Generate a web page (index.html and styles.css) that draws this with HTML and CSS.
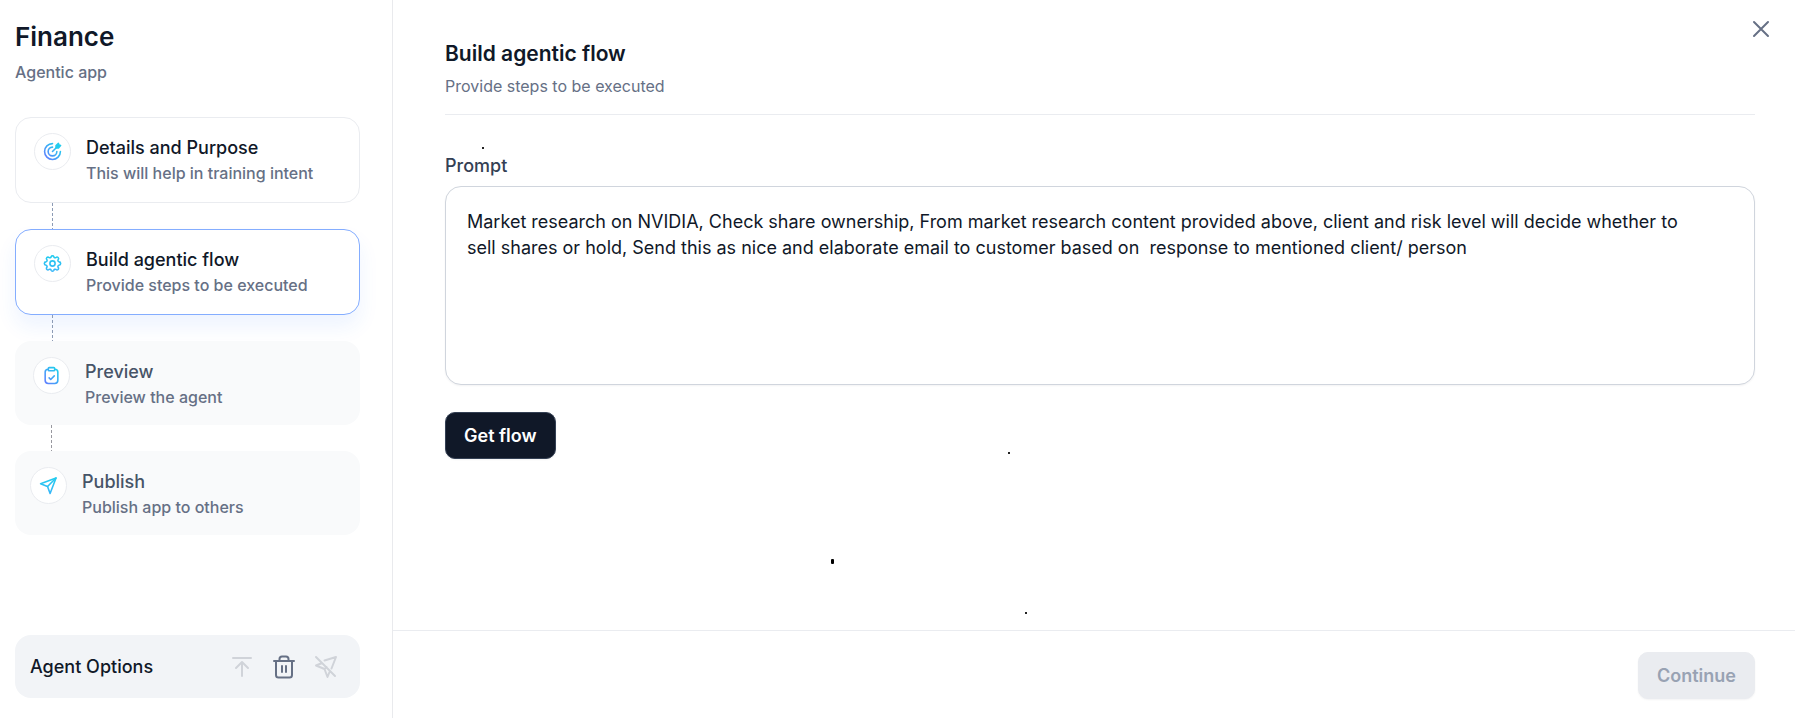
FILE: index.html
```html
<!DOCTYPE html>
<html lang="en">
<head>
<meta charset="utf-8">
<meta name="viewport" content="width=device-width, initial-scale=1">
<title>Finance - Build agentic flow</title>
<link rel="stylesheet" href="styles.css">
</head>
<body>
<svg class="defs" width="0" height="0" aria-hidden="true">
  <defs>
    <linearGradient id="sky" gradientUnits="userSpaceOnUse" x1="19" y1="5" x2="3" y2="20">
      <stop offset="0" stop-color="#22ccee"/><stop offset="1" stop-color="#6080ff"/>
    </linearGradient>
    <linearGradient id="cyan" gradientUnits="userSpaceOnUse" x1="12" y1="2" x2="12" y2="22">
      <stop offset="0" stop-color="#22ccee"/><stop offset="1" stop-color="#38b6f8"/>
    </linearGradient>
  </defs>
</svg>
<div class="app">
  <aside class="sidebar">
    <header class="app-head">
      <h1 class="app-title">Finance</h1>
      <p class="app-kind">Agentic app</p>
    </header>
    <nav class="steps" aria-label="Setup steps">
      <button class="step" type="button">
        <span class="step-icon">
          <svg viewBox="0 0 24 24" fill="none" stroke="url(#sky)" stroke-width="2" stroke-linecap="round" stroke-linejoin="round"><path d="M22 12A10 10 0 1 1 12 2"/><path d="M17.5 12A5.500 5.500 0 1 1 12 6.500"/><path d="M12 12L17 7"/><path d="M16.500 7.500V4.500L19.500 1.800L20.200 3.800L22.200 4.500L19.500 7.500Z" fill="#22ccee" stroke="#22ccee"/></svg>
        </span>
        <span class="step-text"><span class="step-title">Details and Purpose</span><span class="step-sub">This will help in training intent</span></span>
      </button>
      <span class="link"></span>
      <button class="step active" type="button" aria-current="step">
        <span class="step-icon">
          <svg viewBox="0 0 24 24" fill="none" stroke="url(#cyan)" stroke-width="2" stroke-linecap="round" stroke-linejoin="round"><circle cx="12" cy="12" r="3.300"/><path d="M10.300 3.400a1.800 1.800 0 0 1 3.400 0a1.800 1.800 0 0 0 2.700 1.100a1.800 1.800 0 0 1 2.700 2.700a1.800 1.800 0 0 0 1.100 2.700a1.800 1.800 0 0 1 0 4.200a1.800 1.800 0 0 0-1.100 2.700a1.800 1.800 0 0 1-2.700 2.700a1.800 1.800 0 0 0-2.700 1.100a1.800 1.800 0 0 1-3.400 0a1.800 1.800 0 0 0-2.700-1.100a1.800 1.800 0 0 1-2.700-2.700a1.800 1.800 0 0 0-1.100-2.700a1.800 1.800 0 0 1 0-4.200a1.800 1.800 0 0 0 1.100-2.700a1.800 1.800 0 0 1 2.700-2.700a1.800 1.800 0 0 0 2.700-1.100z"/></svg>
        </span>
        <span class="step-text"><span class="step-title">Build agentic flow</span><span class="step-sub">Provide steps to be executed</span></span>
      </button>
      <span class="link"></span>
      <button class="step pending" type="button">
        <span class="step-icon">
          <svg viewBox="0 0 24 24" fill="none" stroke="url(#sky)" stroke-width="2" stroke-linecap="round" stroke-linejoin="round"><path d="M16 4c2.500 0 4 .8 4 3.500V18c0 2.500-1 4-4 4H8c-3 0-4-1.500-4-4V7.500C4 4.800 5.500 4 8 4"/><rect x="8" y="2" width="8" height="4" rx="1"/><path d="M9 15l2 2 4.500-4.500"/></svg>
        </span>
        <span class="step-text"><span class="step-title">Preview</span><span class="step-sub">Preview the agent</span></span>
      </button>
      <span class="link grey"></span>
      <button class="step pending last" type="button">
        <span class="step-icon">
          <svg viewBox="0 0 24 24" fill="none" stroke="url(#cyan)" stroke-width="2" stroke-linecap="round" stroke-linejoin="round"><path d="M21.500 2.500L2 9.800l8.800 3.500L14 22z"/><path d="M21.500 2.500L10.800 13.300"/></svg>
        </span>
        <span class="step-text"><span class="step-title">Publish</span><span class="step-sub">Publish app to others</span></span>
      </button>
    </nav>
    <section class="options" aria-label="Agent Options">
      <span class="options-title">Agent Options</span>
      <button class="icon-btn" type="button" aria-label="Upload" disabled>
        <svg viewBox="0 0 24 24" fill="none" stroke="currentColor" stroke-width="2" stroke-linecap="round" stroke-linejoin="round"><path d="M3 3h18M12 21V7M6 13l6-6 6 6"/></svg>
      </button>
      <button class="icon-btn" type="button" aria-label="Delete">
        <svg viewBox="0 0 24 24" fill="none" stroke="currentColor" stroke-width="2" stroke-linecap="round" stroke-linejoin="round"><path d="M2 6h20M7.500 6V4a2.500 2.500 0 0 1 2.500-2.500h4A2.500 2.500 0 0 1 16.500 4v2M4 6v14a2.500 2.500 0 0 0 2.500 2.500h11A2.500 2.500 0 0 0 20 20V6M10 11v6M14 11v6"/></svg>
      </button>
      <button class="icon-btn" type="button" aria-label="Unpublish" disabled>
        <svg viewBox="0 0 24 24" fill="none" stroke="currentColor" stroke-width="2" stroke-linecap="round" stroke-linejoin="round"><path d="M10.500 5.500L22 2l-4.500 11.500M15.500 17L13.500 22l-3-8L2 10.500l5-2M2 2l19 19M10.500 14l2-2"/></svg>
      </button>
    </section>
  </aside>
  <main class="main">
    <button class="close" type="button" aria-label="Close">
      <svg viewBox="0 0 24 24" fill="none" stroke="currentColor" stroke-width="2" stroke-linecap="round"><path d="M5 5l14 14M19 5L5 19"/></svg>
    </button>
    <div class="content">
      <header class="page-head">
        <h2 class="page-title">Build agentic flow</h2>
        <p class="page-sub">Provide steps to be executed</p>
      </header>
      <form class="form">
        <label class="label" for="prompt">Prompt</label>
        <textarea class="prompt" id="prompt" spellcheck="false">Market research on NVIDIA, Check share ownership, From market research content provided above, client and risk level will decide whether to sell shares or hold, Send this as nice and elaborate email to customer based on  response to mentioned client/ person</textarea>
        <button class="btn primary" type="button">Get flow</button>
      </form>
    </div>
    <footer class="foot">
      <button class="btn" type="button" disabled>Continue</button>
    </footer>
    <span class="speck speck-a"></span>
    <span class="speck speck-b"></span>
    <span class="speck speck-c"></span>
    <span class="speck speck-d"></span>
  </main>
</div>
</body>
</html>
```
FILE: styles.css
```css
* { box-sizing: border-box; }
body {
  margin: 0;
  background: #fff;
  color: #101828;
  font-family: Inter, "Liberation Sans", sans-serif;
}
h1, h2, p { margin: 0; }
button { font: inherit; color: inherit; }
svg { display: block; }
.defs { position: absolute; }

.app { display: flex; min-height: 100vh; }

.sidebar {
  display: flex;
  flex-direction: column;
  flex: none;
  width: 393px;
  padding: 20px 32px 20px 15px;
  border-right: 1px solid #e9eaed;
}
.app-head { margin-bottom: 32px; }
.app-title { font-size: 26px; line-height: 34px; font-weight: 600; }
.app-kind { margin-top: 6px; font-size: 16px; line-height: 25px; font-weight: 500; color: #667085; }

.steps { display: flex; flex-direction: column; }
.step {
  display: flex;
  gap: 15px;
  padding: 15px 18px 19px;
  border: 1px solid #eaecf0;
  border-radius: 16px;
  background: #fff;
  text-align: left;
}
.step.active { border-color: #84adff; box-shadow: 0 12px 20px rgba(41, 112, 255, 0.08); }
.step.pending { padding: 16px 18px 18px; border: 0; background: #f9fafb; position: relative; }
.step.last { padding-left: 15px; }
.step-icon {
  display: grid;
  place-items: center;
  flex: none;
  width: 37px;
  height: 37px;
  border: 1px solid #eaecf0;
  border-radius: 50%;
  background: #fff;
}
.step-icon svg { width: 19px; height: 19px; }
.step-text { display: flex; flex-direction: column; }
.step-title { font-size: 18px; line-height: 30px; font-weight: 500; }
.step-sub { font-size: 16px; line-height: 20px; font-weight: 500; color: #667085; }
.pending .step-title { color: #475467; }
.link {
  position: relative;
  z-index: 1;
  width: 1px;
  height: 26px;
  margin-left: 37px;
  background: repeating-linear-gradient(#8c9bb5 0 3px, transparent 3px 5px);
}
.link.grey { margin-left: 36px; background: repeating-linear-gradient(#98989f 0 3px, transparent 3px 5px); }

.options {
  display: flex;
  align-items: center;
  gap: 18px;
  margin-top: auto;
  padding: 19px 22px 18px 15px;
  border-radius: 16px;
  background: #f2f4f7;
}
.options-title { flex: 1; font-size: 18px; line-height: 26px; font-weight: 500; }
.icon-btn { padding: 0; border: 0; background: none; color: #667085; }
.icon-btn:disabled { color: #d0d3d9; }
.icon-btn svg { width: 24px; height: 24px; }

.main { position: relative; display: flex; flex-direction: column; flex: 1; min-width: 0; }
.close { position: absolute; top: 17px; right: 22px; padding: 0; border: 0; background: none; color: #667085; }
.close svg { width: 24px; height: 24px; }
.content { flex: 1; padding: 38px 40px 24px 52px; }
.page-head { padding-bottom: 15px; border-bottom: 1px solid #eaecf0; }
.page-title { font-size: 21px; line-height: 32px; font-weight: 600; }
.page-sub { margin-top: 3px; font-size: 16px; line-height: 26px; color: #667085; }
.form { display: flex; flex-direction: column; align-items: flex-start; margin-top: 38px; }
.label { font-size: 18px; line-height: 26px; font-weight: 500; color: #344054; }
.prompt {
  width: 100%;
  height: 199px;
  margin: 7px 0 27px;
  padding: 22px 48px 22px 21px;
  border: 1px solid #d0d5dd;
  border-radius: 16px;
  background: #fff;
  box-shadow: 0 1px 2px rgba(16, 24, 40, 0.05);
  color: #101828;
  font: 400 18px/26px Inter, "Liberation Sans", sans-serif;
  resize: none;
  outline: none;
}
.btn {
  padding: 10px 18px;
  border: 1px solid #eaecf0;
  border-radius: 10px;
  background: #eaecf0;
  box-shadow: 0 1px 2px rgba(16, 24, 40, 0.05);
  color: #98a2b3;
  font-size: 18px;
  line-height: 25px;
  font-weight: 600;
}
.btn.primary { border-color: #344054; background: #101828; color: #fff; }
.foot {
  display: flex;
  justify-content: flex-end;
  padding: 21px 40px 19px;
  border-top: 1px solid #eaecf0;
}

.speck { position: absolute; width: 2px; height: 2px; background: #222; }
.speck-a { left: 89px; top: 147px; }
.speck-b { left: 615px; top: 452px; }
.speck-c { left: 438px; top: 559px; width: 3px; height: 5px; border-radius: 1px; background: #000; }
.speck-d { left: 632px; top: 612px; }
```
